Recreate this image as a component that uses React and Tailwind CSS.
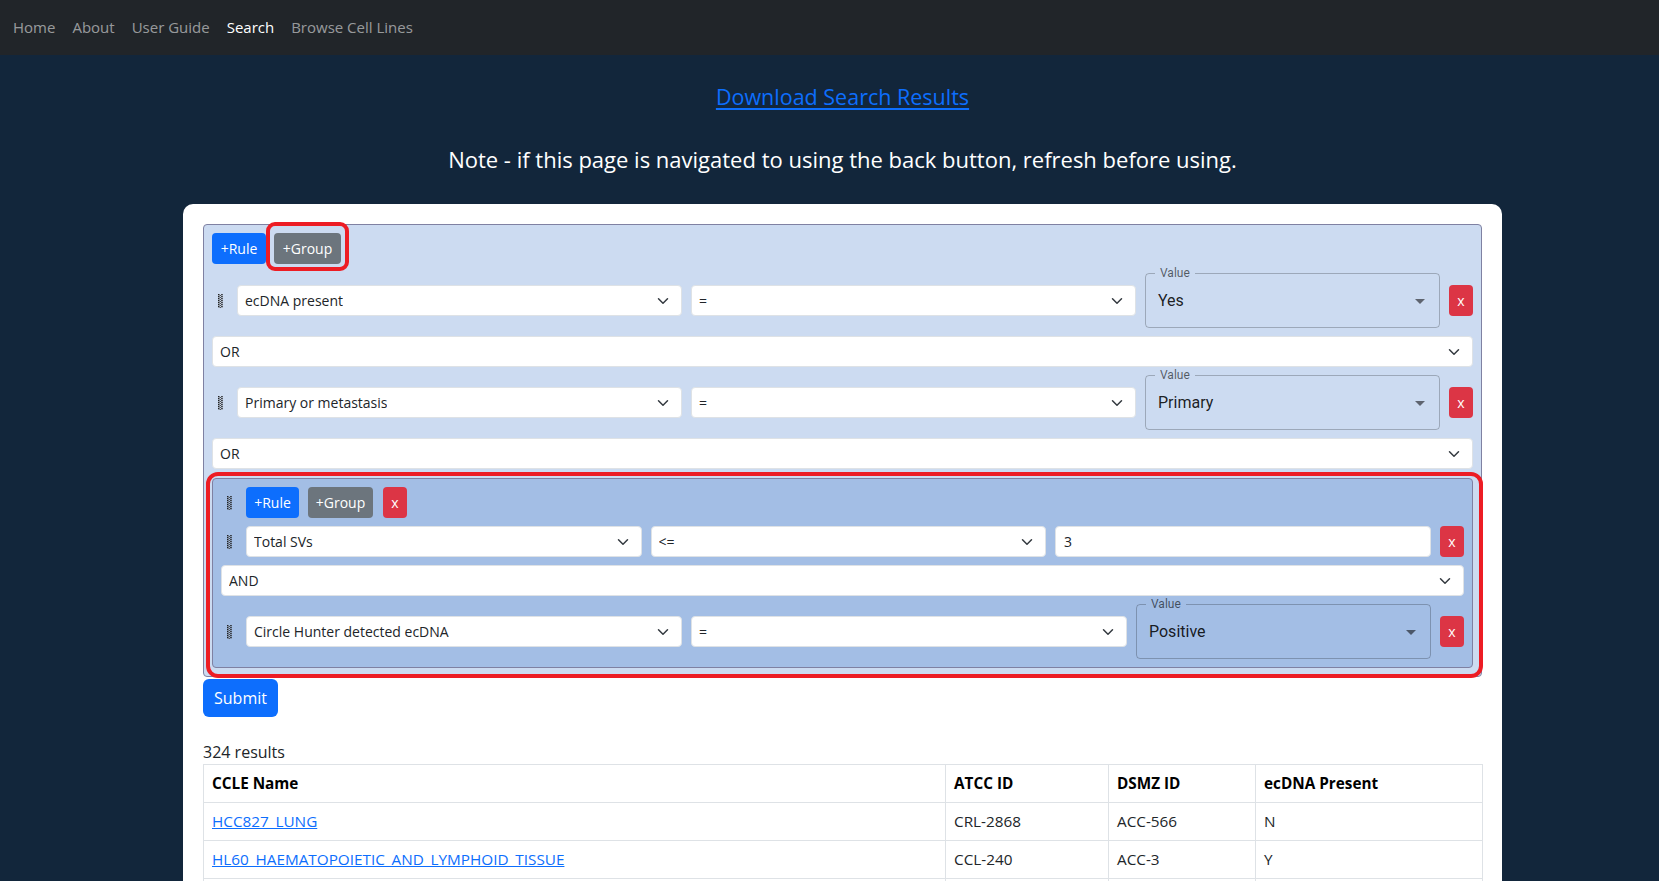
import React from "react";

function Chevron() {
  return (
    <svg width="12" height="12" viewBox="0 0 16 16" fill="none" stroke="#343a40" strokeWidth="2" strokeLinecap="round" strokeLinejoin="round">
      <path d="m2 5 6 6 6-6" />
    </svg>
  );
}

function Handle() {
  const dots = [];
  for (let r = 0; r < 7; r++) {
    dots.push(<rect key={"a" + r} x="0" y={r * 2} width="1.5" height="1.3" fill="#222" />);
    dots.push(<rect key={"b" + r} x="3.2" y={r * 2} width="1.5" height="1.3" fill="#222" />);
    dots.push(<rect key={"c" + r} x="1.6" y={r * 2 + 1} width="1.4" height="1.0" fill="#555" />);
  }
  return (
    <div className="flex w-[16px] shrink-0 items-center justify-center">
      <svg width="5" height="14" viewBox="0 0 5 14">{dots}</svg>
    </div>
  );
}

function Select({ text, className }) {
  return (
    <div className={"flex h-[31px] min-w-0 items-center justify-between rounded-[4px] border border-[#dee2e6] bg-white pl-[7px] pr-[12px] text-[14px] text-[#212529] " + className}>
      <span className="truncate">{text}</span>
      <Chevron />
    </div>
  );
}

function ValueField({ text }) {
  return (
    <fieldset className="-mt-[7px] w-[295px] shrink-0 rounded-[4px] border border-[rgba(0,0,0,0.23)] font-[Roboto,sans-serif]">
      <legend className="ml-[9px] px-[5px] text-[12px] leading-[14px] text-[rgba(0,0,0,0.6)]">Value</legend>
      <div className="flex h-[47px] items-center justify-between pb-[6px] pl-[12px] pr-[7px]">
        <span className="text-[16px] text-[rgba(0,0,0,0.87)]">{text}</span>
        <svg width="24" height="24" viewBox="0 0 24 24" fill="rgba(0,0,0,0.54)">
          <path d="M7 10l5 5 5-5z" />
        </svg>
      </div>
    </fieldset>
  );
}

function XButton({ className }) {
  return (
    <div className={"flex h-[31px] w-[24px] shrink-0 items-center justify-center rounded-[4px] bg-[#dc3545] text-[14px] leading-none text-white " + (className || "")}>
      x
    </div>
  );
}

function Btn({ children, color, w }) {
  return (
    <div className={"flex h-[31px] items-center justify-center rounded-[4px] text-[14px] text-white " + color + " " + w}>
      {children}
    </div>
  );
}

function Combinator({ text }) {
  return <Select text={text} className="w-full" />;
}

export default function App() {
  return (
    <div className="min-h-screen bg-[#12263b] font-['Open_Sans',sans-serif] text-[#212529]">
      <nav className="flex h-[55px] items-center gap-[17px] bg-[#212529] pl-[13px] text-[15px]">
        <span className="text-[rgba(255,255,255,0.55)]">Home</span>
        <span className="text-[rgba(255,255,255,0.55)]">About</span>
        <span className="text-[rgba(255,255,255,0.55)]">User Guide</span>
        <span className="text-white">Search</span>
        <span className="text-[rgba(255,255,255,0.55)]">Browse Cell Lines</span>
      </nav>

      <div className="ml-[183px] w-[1319px]">
        <div className="pt-[29px] text-center text-[21.5px] leading-[26px]">
          <a className="text-[#0d6efd] underline underline-offset-[3px]">Download Search Results</a>
        </div>
        <div className="mt-[36px] text-center text-[22px] leading-[26px] text-white">
          Note - if this page is navigated to using the back button, refresh before using.
        </div>

        <div className="mt-[32px] min-h-[700px] rounded-t-[10px] bg-white p-5">
          {/* Root group */}
          <div className="flex flex-col gap-2 rounded-[4px] border border-[#7f81a2] bg-[#ccdbf1] p-2">
            <div className="flex items-center gap-2">
              <Btn color="bg-[#0d6efd]" w="w-[54px]">+Rule</Btn>
              <div className="relative">
                <Btn color="bg-[#6c757d]" w="w-[67px]">+Group</Btn>
                <span className="pointer-events-none absolute -top-[11px] -bottom-[7px] -left-[8px] -right-[8px] rounded-[9px] border-[4px] border-[#ed1c24]"></span>
              </div>
            </div>

            <div className="mt-[1px] flex items-center gap-[9px]">
              <Handle />
              <Select text="ecDNA present" className="flex-1" />
              <Select text="=" className="flex-1" />
              <ValueField text="Yes" />
              <XButton />
            </div>

            <Combinator text="OR" />

            <div className="flex items-center gap-[9px]">
              <Handle />
              <Select text="Primary or metastasis" className="flex-1" />
              <Select text="=" className="flex-1" />
              <ValueField text="Primary" />
              <XButton />
            </div>

            <Combinator text="OR" />

            {/* Nested group */}
            <div className="relative mt-[1px]">
              <div className="flex flex-col gap-2 rounded-[4px] border border-[#7f81a2] bg-[#a3bee5] p-2">
                <div className="flex items-center gap-[9px]">
                  <Handle />
                  <div className="flex items-center gap-[9px]">
                    <Btn color="bg-[#0d6efd]" w="w-[53px]">+Rule</Btn>
                    <Btn color="bg-[#6c757d]" w="w-[65px]">+Group</Btn>
                    <XButton className="ml-[1px] w-[23px]" />
                  </div>
                </div>

                <div className="flex items-center gap-[9px]">
                  <Handle />
                  <Select text="Total SVs" className="flex-1" />
                  <Select text="<=" className="flex-1" />
                  <div className="flex h-[31px] w-[376px] shrink-0 items-center rounded-[4px] border border-[#dee2e6] bg-white pl-[8px] text-[14px]">3</div>
                  <XButton />
                </div>

                <Combinator text="AND" />

                <div className="flex items-center gap-[9px]">
                  <Handle />
                  <Select text="Circle Hunter detected ecDNA" className="flex-1" />
                  <Select text="=" className="flex-1" />
                  <ValueField text="Positive" />
                  <XButton />
                </div>
              </div>
              <span className="pointer-events-none absolute -top-[6px] -bottom-[10px] -left-[6px] -right-[10px] rounded-[12px] border-[4px] border-[#ed1c24]"></span>
            </div>
          </div>

          <div className="mt-[2px] flex h-[38px] w-[75px] items-center justify-center rounded-[6px] bg-[#0d6efd] text-[16px] text-white">
            Submit
          </div>

          <div className="mt-[23px] text-[16px] leading-[24px]">324 results</div>

          <table className="w-[1279px] table-fixed border-collapse border border-[#dee2e6] text-[15.3px]">
            <colgroup>
              <col className="w-[742px]" />
              <col className="w-[163px]" />
              <col className="w-[147px]" />
              <col className="w-[227px]" />
            </colgroup>
            <thead>
              <tr className="h-[38px] border-b border-[#dee2e6] font-bold text-black">
                <th className="border-r border-[#dee2e6] px-2 text-left">CCLE Name</th>
                <th className="border-r border-[#dee2e6] px-2 text-left">ATCC ID</th>
                <th className="border-r border-[#dee2e6] px-2 text-left">DSMZ ID</th>
                <th className="px-2 text-left">ecDNA Present</th>
              </tr>
            </thead>
            <tbody>
              <tr className="h-[38px] border-b border-[#dee2e6]">
                <td className="border-r border-[#dee2e6] px-2"><a className="text-[#0d6efd] underline">HCC827_LUNG</a></td>
                <td className="border-r border-[#dee2e6] px-2">CRL-2868</td>
                <td className="border-r border-[#dee2e6] px-2">ACC-566</td>
                <td className="px-2">N</td>
              </tr>
              <tr className="h-[38px] border-b border-[#dee2e6]">
                <td className="border-r border-[#dee2e6] px-2"><a className="text-[#0d6efd] underline">HL60_HAEMATOPOIETIC_AND_LYMPHOID_TISSUE</a></td>
                <td className="border-r border-[#dee2e6] px-2">CCL-240</td>
                <td className="border-r border-[#dee2e6] px-2">ACC-3</td>
                <td className="px-2">Y</td>
              </tr>
              <tr className="h-[38px] border-b border-[#dee2e6]">
                <td className="border-r border-[#dee2e6] px-2"></td>
                <td className="border-r border-[#dee2e6] px-2"></td>
                <td className="border-r border-[#dee2e6] px-2"></td>
                <td className="px-2"></td>
              </tr>
            </tbody>
          </table>
        </div>
      </div>
    </div>
  );
}
